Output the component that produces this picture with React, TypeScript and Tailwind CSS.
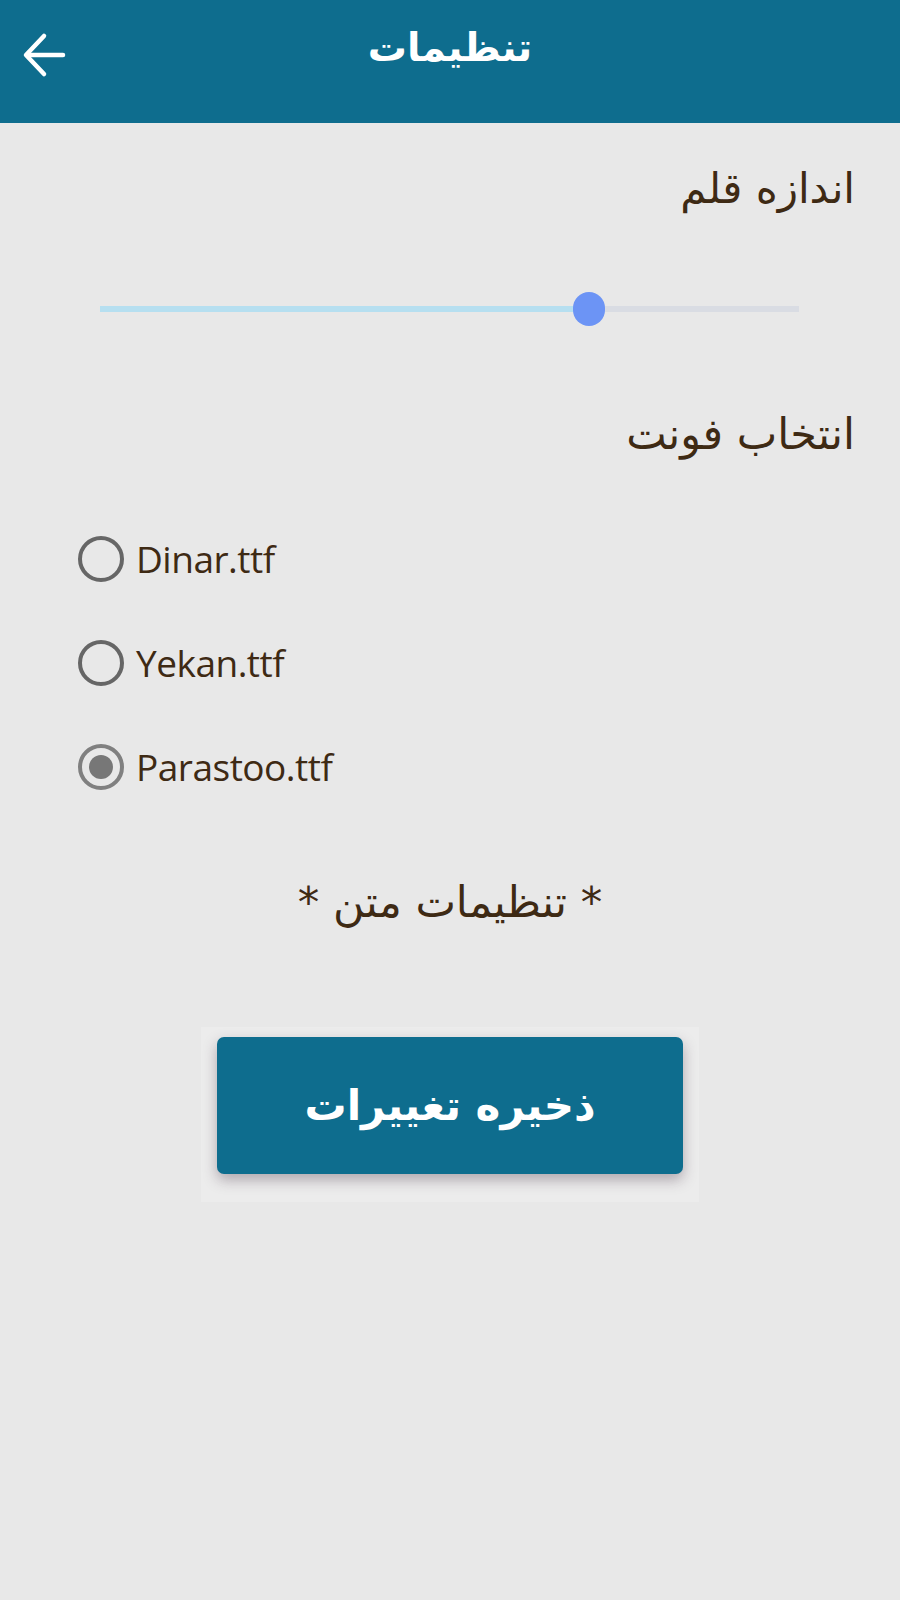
import React, { useState } from 'react';

const fonts = ['Dinar.ttf', 'Yekan.ttf', 'Parastoo.ttf'];

export default function App() {
  const [selected, setSelected] = useState('Parastoo.ttf');
  const [size] = useState(70);

  return (
    <div className="min-h-[1600px] w-[900px] bg-[#e8e8e8] font-['DejaVu_Sans',sans-serif]">
      {/* Header */}
      <div className="relative flex h-[123px] items-center justify-center bg-[#0e6d8e]">
        <button className="absolute left-[22px] top-[32px] text-white">
          <svg width="44" height="46" viewBox="0 0 44 46" fill="none" stroke="currentColor" strokeWidth="4.5" strokeLinecap="round" strokeLinejoin="round">
            <path d="M41 23H5" />
            <path d="M22 4L4 23l18 19" />
          </svg>
        </button>
        <h1 dir="rtl" className="-mt-[26px] text-[39px] font-semibold text-white">تنظیمات</h1>
      </div>

      <div dir="rtl" className="px-[45px] text-[#3e2a14]">
        {/* Font size */}
        <h2 className="mt-[34px] text-[42px] leading-[64px]">اندازه قلم</h2>

        <div dir="ltr" className="ml-[55px] mr-[56px] mt-[85px]">
          <div className="relative h-[6px] bg-[#d9dce3]">
            <div className="h-full bg-[#b6dff0]" style={{ width: `${size}%` }} />
            <div
              className="absolute top-1/2 h-[34px] w-[32px] -translate-x-1/2 -translate-y-1/2 rounded-full bg-[#6c94f5]"
              style={{ left: `${size}%` }}
            />
          </div>
        </div>

        {/* Font picker */}
        <h2 className="mt-[90px] text-[43px] leading-[64px]">انتخاب فونت</h2>

        <div dir="ltr" className="ml-[33px] mt-[70px] flex flex-col gap-[58px]">
          {fonts.map(f => {
            const active = selected === f;
            return (
              <label key={f} className="flex h-[46px] cursor-pointer items-center gap-[12px]" onClick={() => setSelected(f)}>
                <span className={`flex h-[46px] w-[46px] items-center justify-center rounded-full border-[4px] ${active ? 'border-[#808080]' : 'border-[#666666]'}`}>
                  {active && <span className="h-[24px] w-[24px] rounded-full bg-[#777777]" />}
                </span>
                <span className="font-['Open_Sans',sans-serif] text-[37px] tracking-[-0.5px] text-[#3e2a14]">{f}</span>
              </label>
            );
          })}
        </div>

        <p className="mt-[80px] text-center text-[43px] leading-[64px]">* تنظیمات متن *</p>
      </div>

      {/* Save button */}
      <div className="mt-[93px] flex justify-center">
        <div className="bg-[#ececec] px-[16px] pb-[28px] pt-[10px]">
          <button className="h-[137px] w-[466px] rounded-[7px] bg-[#0e6d8e] text-[42px] font-bold text-white shadow-[0_6px_14px_rgba(60,40,60,0.35)]">
            <span dir="rtl">ذخیره تغییرات</span>
          </button>
        </div>
      </div>
    </div>
  );
}
